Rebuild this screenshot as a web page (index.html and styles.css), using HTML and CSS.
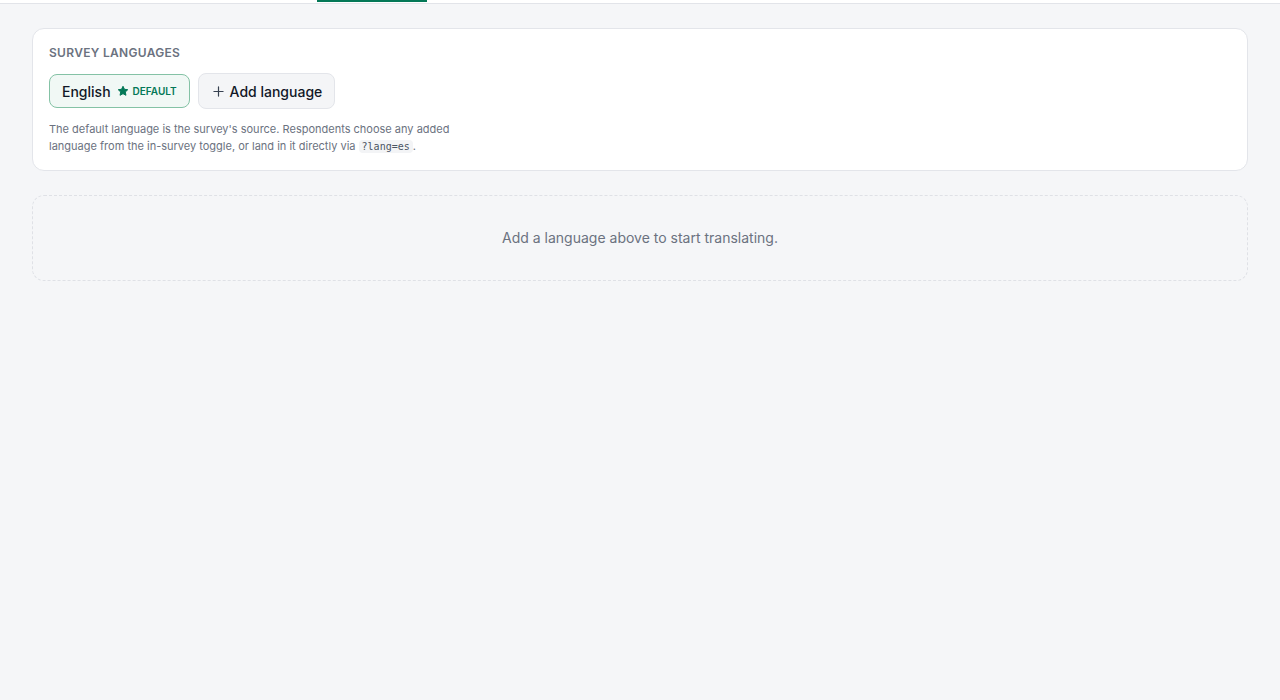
FILE: index.html
```html
<!DOCTYPE html>
<html lang="en">

<head>
  <meta charset="UTF-8">
  <meta name="viewport" content="width=device-width, initial-scale=1.0">
  <title>Survey languages</title>
  <link rel="stylesheet" href="styles.css">
</head>

<body>
  <div class="tabs">
    <span class="tab-active"></span>
  </div>

  <main class="page">
    <section class="card">
      <h2 class="card-title">Survey languages</h2>

      <div class="lang-row">
        <span class="lang-chip">
          English
          <span class="default-tag">
            <svg width="12" height="12" viewBox="0 0 24 24" aria-hidden="true">
              <path d="M12 2.5l2.9 6.1 6.6.8-4.9 4.6 1.3 6.6L12 17.3l-5.9 3.3 1.3-6.6-4.9-4.6 6.6-.8z" fill="currentColor" stroke="currentColor" stroke-width="2" stroke-linejoin="round"/>
            </svg>
            DEFAULT
          </span>
        </span>
        <button type="button" class="add-btn">
          <svg width="11" height="11" viewBox="0 0 12 12" aria-hidden="true">
            <path d="M6 1v10M1 6h10" stroke="currentColor" stroke-width="1.3" stroke-linecap="round"/>
          </svg>
          Add language
        </button>
      </div>

      <p class="help">
        The default language is the survey's source. Respondents choose any added<br>
        language from the in-survey toggle, or land in it directly via <code>?lang=es</code>.
      </p>
    </section>

    <div class="empty">Add a language above to start translating.</div>
  </main>
</body>
</html>
```

FILE: styles.css
```css
* {
  box-sizing: border-box;
}

body {
  margin: 0;
  background-color: #f5f6f8;
  font-family: Inter, 'Noto Sans', sans-serif;
  color: #111827;
}

.tabs {
  height: 4px;
  background-color: #fff;
  border-bottom: 1px solid #e2e4e9;
  position: relative;
}

.tab-active {
  position: absolute;
  left: 317px;
  top: 0;
  width: 110px;
  height: 2px;
  background-color: #047857;
}

.page {
  padding: 24px 32px;
  display: flex;
  flex-direction: column;
  gap: 24px;
}

.card {
  background-color: #fff;
  border: 1px solid #e3e5ea;
  border-radius: 12px;
  padding: 16px 16px 15px;
}

.card-title {
  margin: 0 0 12px;
  font-size: 12px;
  font-weight: 600;
  letter-spacing: 0.3px;
  text-transform: uppercase;
  color: #6b7280;
  line-height: 16px;
}

.lang-row {
  display: flex;
  align-items: center;
  gap: 8px;
}

.lang-chip {
  display: inline-flex;
  align-items: center;
  gap: 6px;
  height: 34px;
  padding: 0 12px;
  border: 1px solid #84c2a5;
  border-radius: 8px;
  background-color: #f1f8f5;
  font-size: 14px;
  font-weight: 500;
  color: #111827;
}

.default-tag {
  display: inline-flex;
  align-items: center;
  gap: 4px;
  font-size: 10px;
  font-weight: 600;
  color: #047857;
}

.add-btn {
  display: inline-flex;
  align-items: center;
  gap: 6px;
  height: 36px;
  padding: 0 12px 0 14px;
  border: 1px solid #e3e5ea;
  border-radius: 8px;
  background-color: #f4f5f7;
  font-family: inherit;
  font-size: 14px;
  font-weight: 500;
  color: #111827;
  cursor: pointer;
}

.add-btn svg {
  color: #374151;
}

.help {
  margin: 12px 0 0;
  font-size: 11px;
  line-height: 17px;
  color: #6b7280;
}

.help code {
  font-family: 'DejaVu Sans Mono', monospace;
  font-size: 10px;
  background-color: #f3f4f6;
  border-radius: 4px;
  padding: 1px 3px;
  color: #4b5563;
}

.empty {
  border: 1px dashed #dfe1e6;
  border-radius: 12px;
  height: 86px;
  display: flex;
  align-items: center;
  justify-content: center;
  padding-bottom: 2px;
  font-size: 14px;
  color: #6b7280;
}
```
